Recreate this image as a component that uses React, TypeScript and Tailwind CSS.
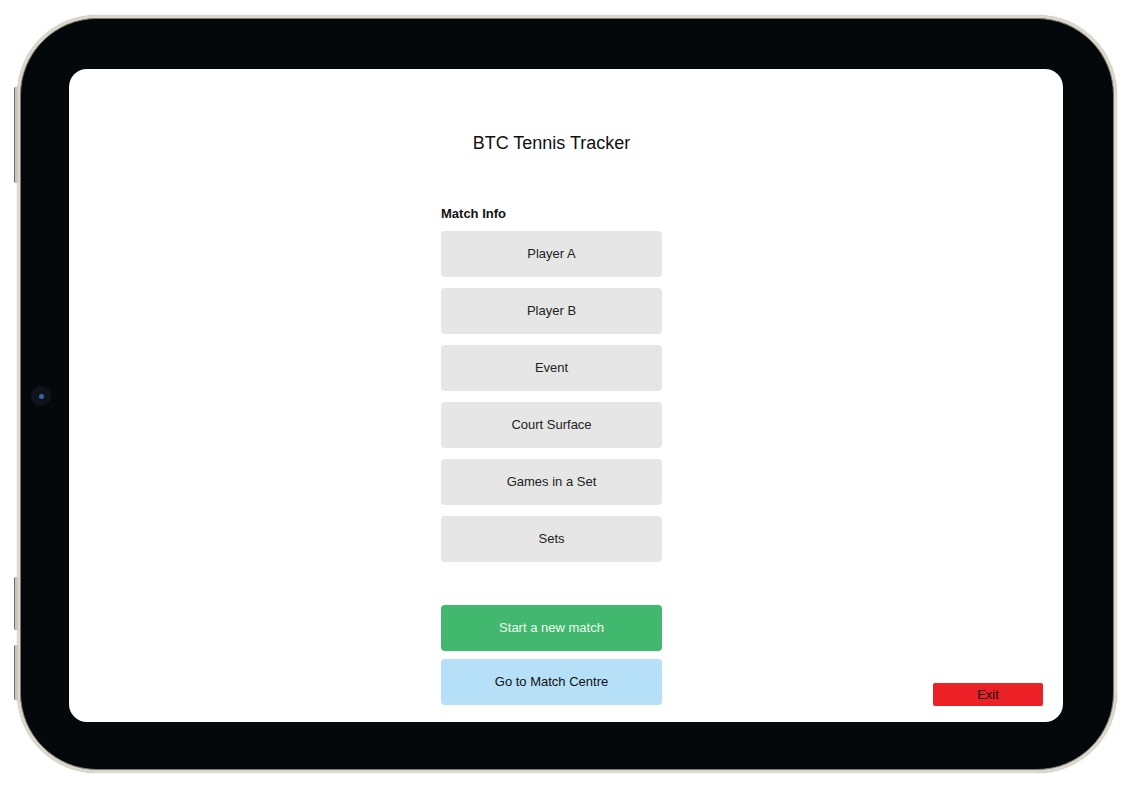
import React from 'react'

const fields = ['Player A', 'Player B', 'Event', 'Court Surface', 'Games in a Set', 'Sets']

function SideButton({ top, height }: { top: string; height: string }) {
  return (
    <div
      className={`absolute left-[-3px] w-[4px] rounded-l-[2px] bg-[#cdc7bb] border-l border-[#6d6a64] ${top} ${height}`}
    />
  )
}

export default function App() {
  return (
    <div className="min-h-[794px] w-[1123px] bg-white pt-[15px] pl-[17px] font-['Liberation_Sans',Arial,sans-serif]">
      <div className="relative w-[1100px] h-[758px] rounded-[80px] bg-[#ddd8cc] p-[3px] shadow-[0_0_1px_rgba(0,0,0,0.4)]">
        <SideButton top="top-[72px]" height="h-[96px]" />
        <SideButton top="top-[562px]" height="h-[53px]" />
        <SideButton top="top-[630px]" height="h-[55px]" />

        <div className="relative w-full h-full rounded-[77px] bg-[#05080a] border border-[#7c7870] pt-[50px] pl-[48px] pr-[49px] pb-[46px]">
          {/* front camera */}
          <div className="absolute left-[10px] top-[367px] w-[20px] h-[20px] rounded-full bg-[#0f141a] flex items-center justify-center">
            <div className="w-[5px] h-[5px] rounded-full bg-[#3d5fa8]" />
          </div>

          <div className="w-[994px] h-[653px] rounded-[18px] bg-white grid grid-cols-[372px_221px_1fr]">
            <div />
            <div className="flex flex-col">
              <h1 className="mt-[63px] text-[18px] leading-[22px] text-[#111] text-center whitespace-nowrap">
                BTC Tennis Tracker
              </h1>
              <div className="mt-[52px] text-[13px] leading-[16px] font-bold text-[#111]">Match Info</div>
              <div className="mt-[9px] flex flex-col gap-[11px]">
                {fields.map(f => (
                  <div
                    key={f}
                    className="h-[46px] rounded-[4px] bg-[#e6e6e6] flex items-center justify-center text-[13px] text-[#222]"
                  >
                    {f}
                  </div>
                ))}
              </div>
              <button className="mt-[43px] h-[46px] rounded-[4px] bg-[#42b86e] text-[13px] text-[#eef8f1]">
                Start a new match
              </button>
              <button className="mt-[8px] h-[46px] rounded-[4px] bg-[#b6e0f8] text-[13px] text-[#111]">
                Go to Match Centre
              </button>
            </div>
            <div className="flex items-end justify-end pr-[20px] pb-[16px]">
              <button className="w-[110px] h-[23px] rounded-[2px] bg-[#ec2027] text-[13px] text-[#111]">Exit</button>
            </div>
          </div>
        </div>
      </div>
    </div>
  )
}
